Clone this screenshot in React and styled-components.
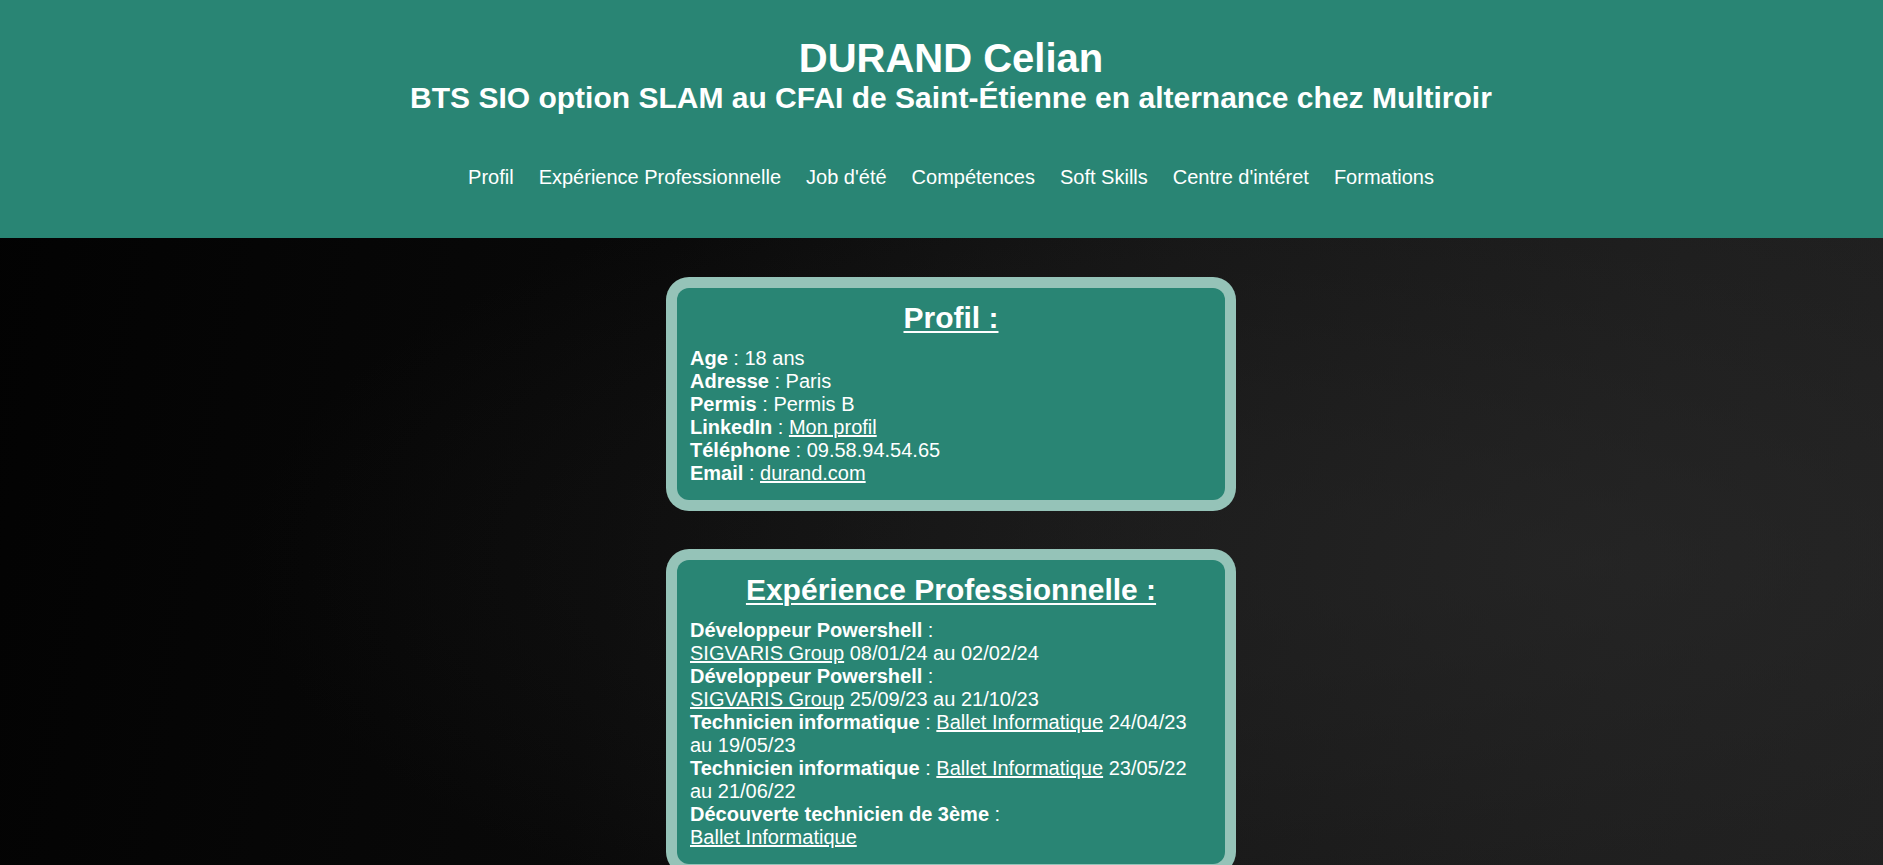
import React from 'react';
import styled, { createGlobalStyle } from 'styled-components';

const GlobalStyle = createGlobalStyle`
  html, body {
    margin: 0;
    padding: 0;
  }

  body {
    min-height: 100vh;
    font-family: "Liberation Sans", Arial, sans-serif;
    font-size: 20px;
    color: #ffffff;
    background-color: #0a0a0a;
    background-image:
      radial-gradient(ellipse at 85% 65%, rgba(42, 42, 42, 0.6) 0%, rgba(42, 42, 42, 0) 60%),
      linear-gradient(100deg, #020202 0%, #090909 35%, #141414 60%, #1c1c1c 85%, #1f1f1f 100%);
    background-attachment: fixed;
  }
`;

const Header = styled.header`
  background-color: #298574;
  padding: 36px 0 49px 19px;
  text-align: center;
`;

const Name = styled.h1`
  margin: 0;
  font-size: 40px;
  font-weight: bold;
`;

const Subtitle = styled.h2`
  margin: 0;
  font-size: 30px;
  font-weight: bold;
`;

const Nav = styled.nav`
  margin-top: 51px;
  display: flex;
  justify-content: center;
  gap: 25px;
`;

const NavLink = styled.a`
  color: #ffffff;
  text-decoration: none;
  font-size: 20px;
  line-height: 23px;
`;

const Main = styled.main`
  display: flex;
  flex-direction: column;
  align-items: center;
  gap: 38px;
  padding: 39px 0 40px 19px;
`;

const Card = styled.section`
  width: 570px;
  box-sizing: border-box;
  padding: 11px;
  background-color: #95c3b8;
  border-radius: 23px;
`;

const CardInner = styled.div`
  background-color: #298574;
  border-radius: 12px;
  padding: 13px 13px 15px;
`;

const CardTitle = styled.h2`
  margin: 0 0 12px;
  font-size: 30px;
  font-weight: bold;
  text-align: center;
  text-decoration: underline;
  text-decoration-thickness: 2px;
  text-underline-offset: 3px;
`;

const Lines = styled.div`
  line-height: 23px;
`;

const Line = styled.div``;

const Label = styled.b``;

const Link = styled.a`
  color: #ffffff;
  text-decoration: underline;
`;

const navItems = [
  'Profil',
  'Expérience Professionnelle',
  "Job d'été",
  'Compétences',
  'Soft Skills',
  "Centre d'intéret",
  'Formations',
];

const App = () => (
  <>
    <GlobalStyle />
    <Header>
      <Name>DURAND Celian</Name>
      <Subtitle>BTS SIO option SLAM au CFAI de Saint-Étienne en alternance chez Multiroir</Subtitle>
      <Nav>
        {navItems.map(item => (
          <NavLink key={item} href="#">{item}</NavLink>
        ))}
      </Nav>
    </Header>

    <Main>
      <Card>
        <CardInner>
          <CardTitle>Profil :</CardTitle>
          <Lines>
            <Line><Label>Age</Label> : 18 ans</Line>
            <Line><Label>Adresse</Label> : Paris</Line>
            <Line><Label>Permis</Label> : Permis B</Line>
            <Line><Label>LinkedIn</Label> : <Link href="#">Mon profil</Link></Line>
            <Line><Label>Téléphone</Label> : 09.58.94.54.65</Line>
            <Line><Label>Email</Label> : <Link href="#">durand.com</Link></Line>
          </Lines>
        </CardInner>
      </Card>

      <Card>
        <CardInner>
          <CardTitle>Expérience Professionnelle :</CardTitle>
          <Lines>
            <Line><Label>Développeur Powershell</Label> :<br /><Link href="#">SIGVARIS Group</Link> 08/01/24 au 02/02/24</Line>
            <Line><Label>Développeur Powershell</Label> :<br /><Link href="#">SIGVARIS Group</Link> 25/09/23 au 21/10/23</Line>
            <Line><Label>Technicien informatique</Label> : <Link href="#">Ballet Informatique</Link> 24/04/23 au 19/05/23</Line>
            <Line><Label>Technicien informatique</Label> : <Link href="#">Ballet Informatique</Link> 23/05/22 au 21/06/22</Line>
            <Line><Label>Découverte technicien de 3ème</Label> :<br /><Link href="#">Ballet Informatique</Link></Line>
          </Lines>
        </CardInner>
      </Card>
    </Main>
  </>
);

export default App;
